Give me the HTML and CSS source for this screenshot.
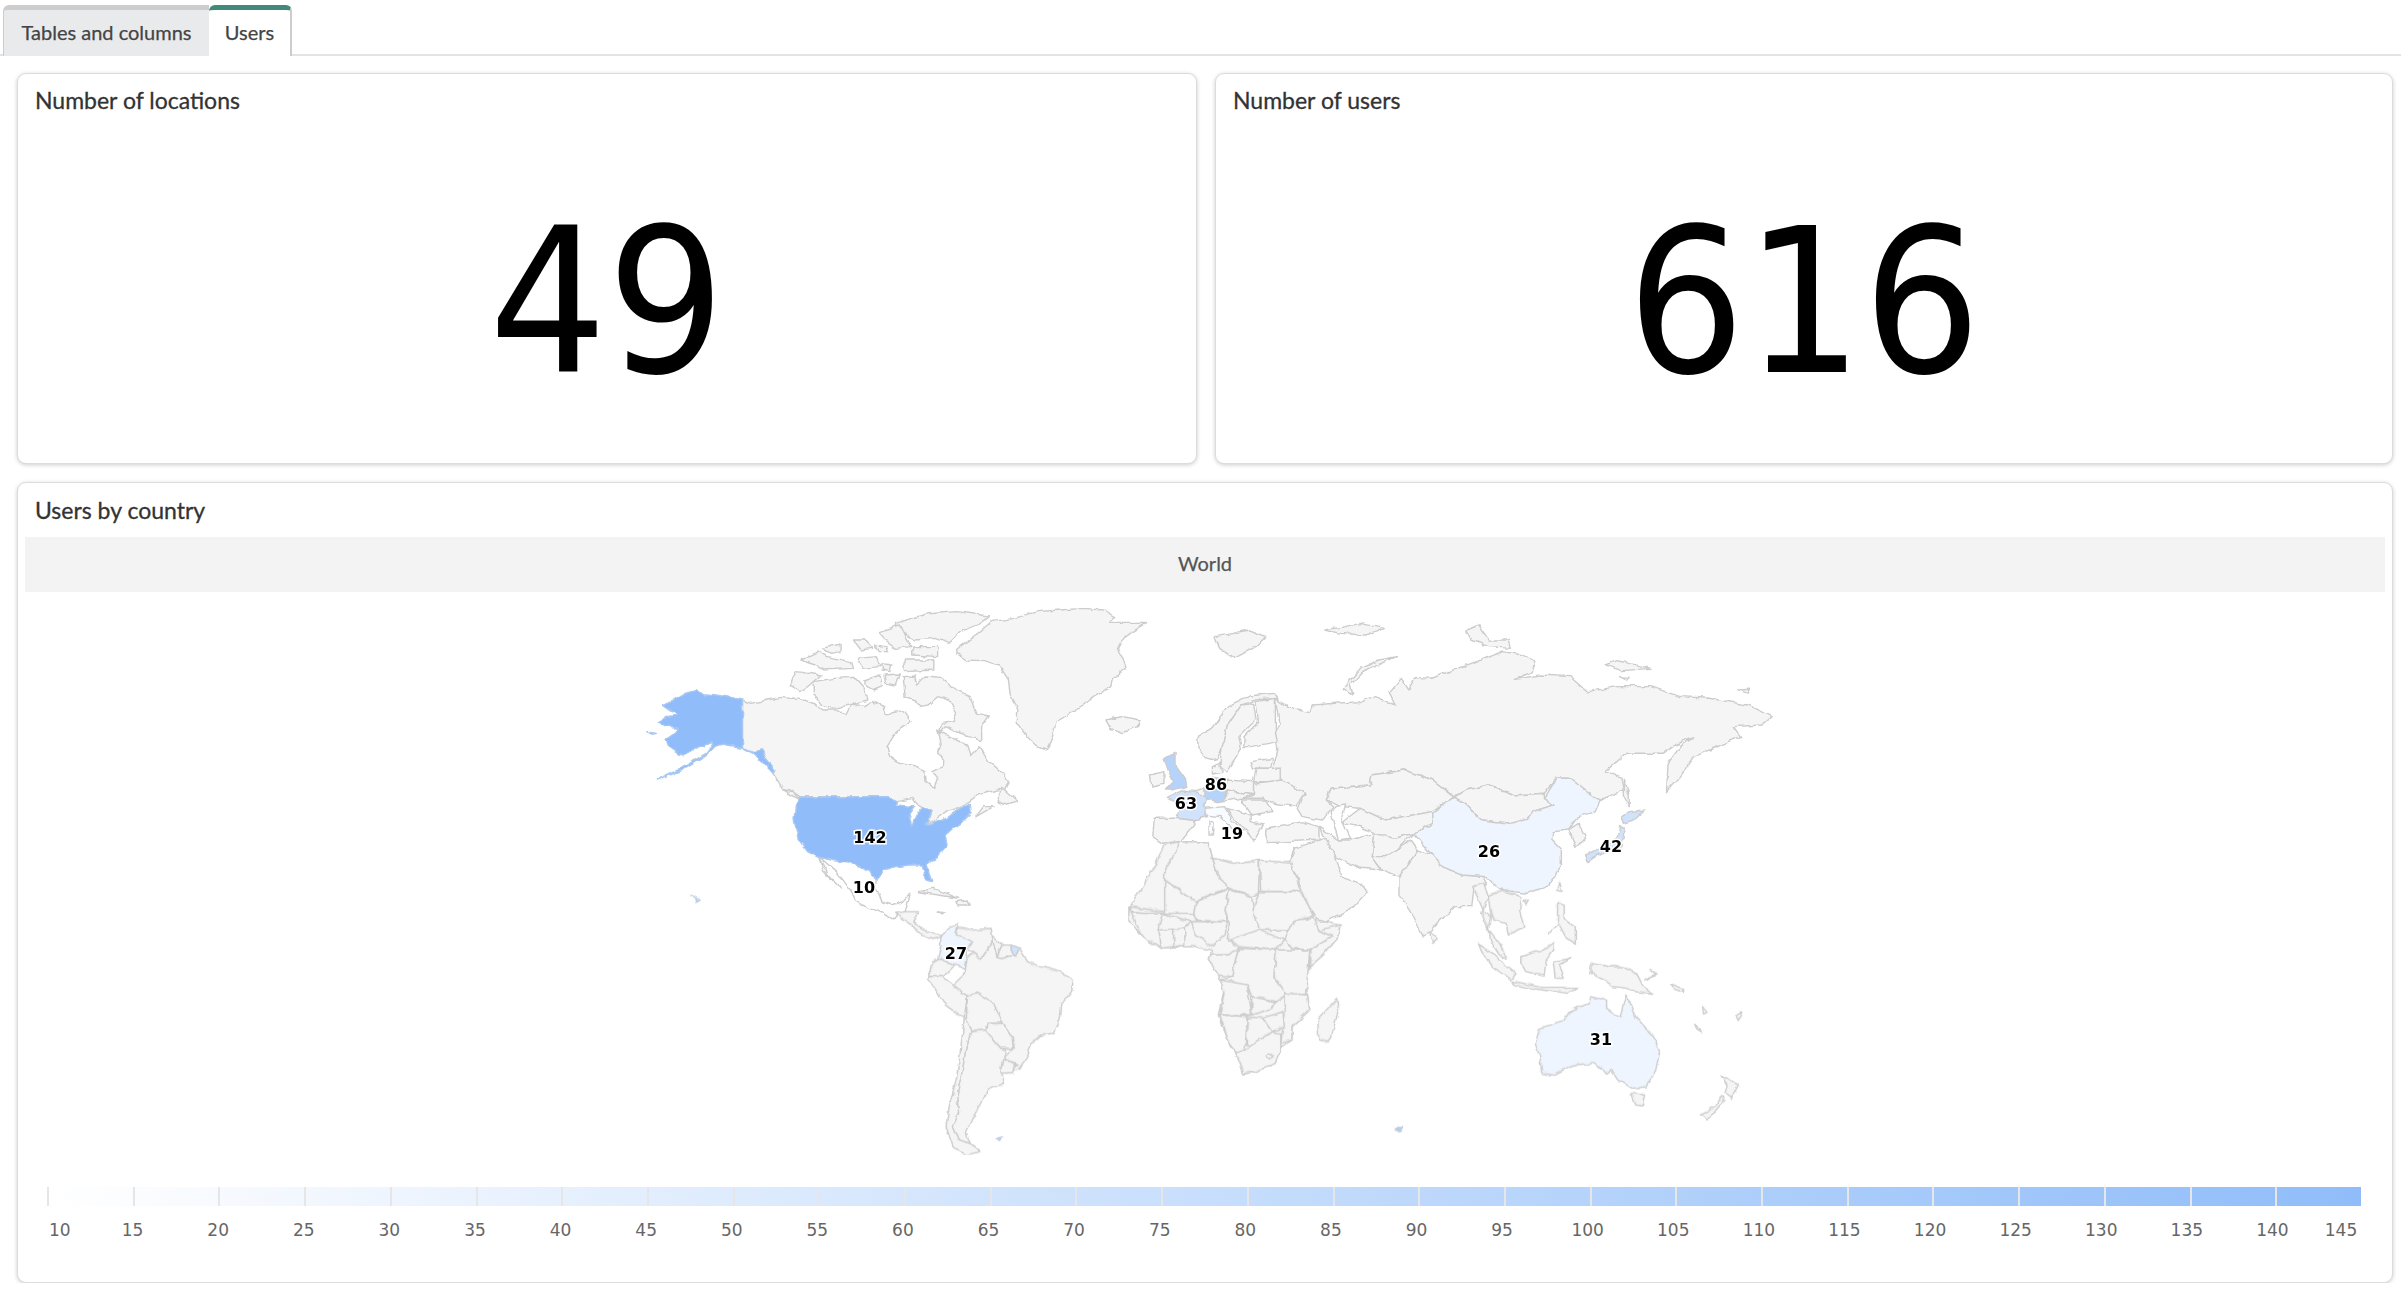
FILE: index.html
```html
<!DOCTYPE html>
<html lang="en">
<head>
    <meta charset="UTF-8">
    <title>Users</title>
    <link rel="stylesheet" href="styles.css">
</head>
<body>
    <div class="tabs">
        <div class="tab">Tables and columns</div>
        <div class="tab active">Users</div>
    </div>

    <div class="dash">
        <div class="card stat">
            <h4>Number of locations</h4>
            <div class="big">49</div>
        </div>
        <div class="card stat">
            <h4>Number of users</h4>
            <div class="big">616</div>
        </div>

        <div class="card map-card">
            <h4>Users by country</h4>
            <div class="band">World</div>

            <svg class="map" width="2360" height="578" viewBox="25 592 2360 578">
                <defs>
                    <!-- roughens the hand drawn coastlines -->
                    <filter id="rough" x="0" y="0" width="100%" height="100%" filterUnits="objectBoundingBox">
                        <feTurbulence type="fractalNoise" baseFrequency="0.11" numOctaves="2" seed="4"/>
                        <feDisplacementMap in="SourceGraphic" scale="5" xChannelSelector="R" yChannelSelector="G"/>
                    </filter>
                </defs>
                <g filter="url(#rough)">
                <!-- north america -->
                <g transform="translate(620,590) scale(.3827,.3333)">
                    <path d="M880,178 L905,155 L935,130 L970,95 L1030,85 L1090,65 L1150,60 L1210,55 L1265,60 L1295,80 L1280,100 L1375,100 L1340,125 L1310,150 L1300,180 L1310,200 L1320,235 L1290,265 L1285,290 L1240,320 L1210,345 L1170,375 L1140,395 L1130,440 L1115,478 L1085,465 L1060,435 L1035,395 L1040,360 L1020,320 L1015,270 L990,225 L950,212 L905,210 L880,190 Z"/>
                    <path d="M1272,395 L1290,382 L1320,388 L1355,392 L1358,405 L1320,425 L1295,420 L1280,408 Z"/>
                    <path d="M320,330 L345,340 L385,330 L420,322 L445,325 L470,325 L510,342 L530,360 L570,360 L590,375 L605,342 L640,350 L660,335 L690,350 L695,372 L740,362 L760,395 L735,415 L715,438 L698,470 L705,500 L730,520 L770,530 L797,545 L800,575 L820,592 L828,570 L815,545 L845,530 L846,505 L830,490 L838,450 L830,420 L860,440 L905,462 L915,497 L938,470 L965,515 L1000,550 L1015,575 L1005,598 L985,600 L935,615 L905,640 L870,660 L855,665 L825,690 L805,700 L815,665 L790,650 L775,640 L765,625 L725,635 L700,620 L470,620 L445,600 L425,595 L400,550 L405,540 L385,510 L370,480 L350,485 L320,472 Z"/>
                    <path d="M740,260 L770,258 L775,285 L800,258 L840,262 L880,300 L915,320 L930,370 L965,378 L945,410 L945,452 L910,440 L880,425 L850,410 L835,430 L840,400 L870,395 L880,370 L860,330 L830,320 L805,345 L785,350 L770,330 L745,320 Z"/>
                    <path d="M640,270 L680,255 L685,290 L665,300 L640,285 Z"/>
                    <path d="M690,255 L730,252 L720,285 L695,280 Z"/>
                    <path d="M505,275 L560,265 L610,262 L640,300 L645,330 L600,345 L560,355 L525,345 L505,310 Z"/>
                    <path d="M445,285 L460,245 L525,255 L490,290 L470,305 Z"/>
                    <path d="M720,100 L800,72 L880,65 L965,78 L940,100 L890,125 L860,160 L825,145 L770,150 L740,130 Z"/>
                    <path d="M745,210 L820,210 L820,240 L745,245 Z"/>
                    <path d="M680,125 L730,105 L745,140 L760,170 L720,175 L690,150 Z"/>
                    <path d="M610,150 L640,150 L660,175 L630,180 Z"/>
                    <path d="M665,165 L695,170 L700,185 L675,185 Z"/>
                    <path d="M530,175 L575,162 L575,185 L550,190 Z"/>
                    <path d="M470,210 L520,185 L540,200 L605,215 L610,235 L530,240 L510,225 Z"/>
                    <path d="M620,205 L670,200 L680,230 L630,235 Z"/>
                    <path d="M685,220 L710,225 L705,245 L685,240 Z"/>
                    <path d="M765,170 L830,170 L830,200 L765,195 Z"/>
                    <path d="M985,635 L1000,595 L1020,615 L1040,635 L1010,645 Z"/>
                    <path d="M930,680 L950,650 L975,650 L945,670 Z"/>
                    <path d="M425,600 L450,605 L470,628 L445,615 Z"/>
                    <path d="M780,905 L820,895 L885,925 L830,915 Z"/>
                    <path d="M875,935 L910,930 L915,945 L880,945 Z"/>
                    <path d="M830,965 L850,968 L845,975 Z"/>
                    <path class="c-white" d="M515,800 L560,812 L590,815 L620,825 L650,845 L672,865 L670,900 L685,935 L710,945 L740,935 L760,910 L745,965 L725,975 L715,990 L690,970 L650,955 L615,930 L605,905 L570,850 L550,830 L530,810 Z"/>
                    <path class="c-white" d="M520,805 L545,855 L575,895 L560,880 L530,840 Z"/>
                    <path class="c-us" d="M320,330 L290,322 L250,315 L215,310 L195,302 L165,312 L140,330 L112,345 L128,358 L150,375 L125,380 L100,395 L118,408 L150,412 L140,432 L118,450 L125,470 L150,490 L165,495 L190,480 L215,470 L235,460 L245,458 L225,490 L190,515 L160,535 L125,555 L95,570 L130,555 L165,540 L200,515 L225,495 L245,470 L265,463 L320,472 L350,485 L370,480 L385,510 L405,540 L400,550 L375,520 L350,490 L320,472 Z"/>
                    <path class="c-us" d="M470,622 L700,620 L725,635 L722,645 L770,650 L755,675 L762,705 L780,665 L790,650 L815,665 L800,705 L845,690 L880,660 L915,640 L918,670 L890,700 L870,715 L850,735 L855,770 L830,800 L800,825 L815,875 L800,870 L790,825 L760,825 L720,830 L690,840 L672,865 L650,845 L620,825 L590,815 L560,812 L515,800 L490,785 L465,745 L455,690 L458,650 Z"/>
                    <path class="c-us" d="M70,425 L95,430 L85,433 Z"/>
                </g>

                <!-- central and south america -->
                <g transform="translate(620,880) scale(.3827,.3333)">
                    <path d="M720,100 L745,95 L780,95 L765,125 L795,150 L825,160 L840,165 L830,172 L805,178 L780,155 L745,120 Z"/>
                    <path class="c-low" d="M838,170 L860,145 L885,130 L878,160 L920,190 L905,205 L905,235 L900,265 L875,255 L845,240 L830,235 L838,200 Z"/>
                    <path d="M885,140 L925,150 L970,145 L975,185 L945,235 L925,215 L905,210 L920,190 L878,160 Z"/>
                    <path d="M975,170 L1000,195 L985,230 L970,205 L975,185 Z"/>
                    <path d="M1000,195 L1025,195 L1025,225 L1005,235 L985,230 Z"/>
                    <path class="c-fr" d="M1025,195 L1045,205 L1035,225 L1025,218 Z"/>
                    <path d="M830,235 L875,255 L845,290 L810,290 L808,265 Z"/>
                    <path d="M1045,205 L1065,245 L1100,260 L1150,275 L1185,300 L1180,335 L1155,370 L1150,420 L1135,460 L1100,465 L1075,490 L1065,530 L1040,570 L1025,570 L1040,555 L1000,535 L1030,505 L1028,475 L1000,440 L990,400 L975,370 L935,340 L908,348 L890,335 L870,318 L900,285 L900,265 L905,235 L925,215 L945,235 L975,185 L985,230 L1005,235 L1025,225 L1035,225 Z"/>
                    <path d="M810,290 L845,290 L870,318 L890,335 L908,348 L900,410 L885,405 L850,375 L820,320 L805,300 Z"/>
                    <path d="M908,348 L935,340 L975,370 L990,400 L1000,430 L960,430 L955,450 L920,455 L905,415 Z"/>
                    <path d="M960,430 L1000,430 L1025,475 L1028,505 L995,505 L955,450 Z"/>
                    <path d="M900,410 L905,415 L920,455 L905,500 L895,570 L880,650 L885,700 L868,740 L885,780 L915,790 L940,815 L905,825 L870,800 L852,740 L860,680 L880,590 L890,510 Z"/>
                    <path d="M920,455 L955,450 L995,505 L1010,510 L995,575 L1005,610 L960,630 L945,670 L925,710 L905,760 L915,790 L885,780 L868,740 L885,700 L880,650 L895,570 L905,500 Z"/>
                    <path d="M1000,535 L1035,555 L1025,578 L1000,580 L995,570 Z"/>
                    <path class="c-isle" d="M985,775 L1000,770 L995,782 Z"/>
                    <path class="c-isle" d="M185,43 L200,52 L210,62 L198,67 L195,55 Z"/>
                </g>

                <!-- eurasia -->
                <g transform="translate(1050,590) scale(.4847,.3333)">
                    <path d="M470,375 L465,325 L490,350 L535,365 L545,345 L590,340 L640,335 L670,320 L712,345 L700,310 L725,265 L740,300 L755,262 L790,265 L830,240 L880,215 L935,185 L975,195 L1000,215 L995,245 L960,268 L1010,255 L1075,260 L1110,305 L1170,290 L1240,290 L1300,320 L1360,325 L1440,345 L1490,380 L1470,405 L1410,410 L1425,440 L1360,480 L1330,500 L1300,560 L1272,605 L1275,520 L1300,470 L1330,440 L1290,465 L1265,490 L1190,490 L1145,545 L1180,565 L1185,600 L1135,630 L1105,600 L1075,565 L1045,565 L1020,610 L960,615 L905,585 L860,600 L835,620 L790,570 L730,540 L665,555 L660,585 L580,595 L570,630 L585,650 L560,690 L520,680 L510,655 L525,610 L480,570 L460,535 L470,480 L465,430 L475,400 Z"/>
                    <path d="M1185,565 L1195,620 L1195,650 L1185,620 Z"/>
                    <path d="M715,200 L680,210 L640,235 L620,270 L605,295 L625,315 L620,285 L645,245 Z"/>
                    <path d="M340,140 L380,130 L410,120 L445,140 L425,170 L380,205 L350,175 Z"/>
                    <path d="M565,120 L610,110 L640,100 L690,115 L650,135 L600,130 Z"/>
                    <path d="M860,120 L885,105 L905,150 L945,150 L950,175 L905,170 L870,150 Z"/>
                    <path d="M1145,225 L1170,212 L1240,235 L1180,242 Z"/>
                    <path d="M1175,260 L1195,262 L1190,270 Z"/>
                    <path d="M1420,300 L1445,298 L1440,310 Z"/>
                    <path d="M115,390 L150,380 L185,390 L180,410 L150,428 L125,415 Z"/>
                    <path d="M305,475 L305,440 L335,415 L365,350 L410,318 L460,310 L470,325 L425,330 L395,345 L365,410 L355,470 L345,510 L320,500 Z"/>
                    <path d="M355,470 L365,410 L395,345 L420,340 L425,390 L390,440 L395,480 L365,545 L350,530 Z"/>
                    <path d="M425,335 L465,325 L465,430 L470,455 L415,470 L400,470 L400,440 L430,395 Z"/>
                    <path d="M207,555 L235,545 L235,580 L210,588 Z"/>
                    <path d="M335,530 L350,520 L355,550 L335,555 Z"/>
                    <path d="M415,515 L460,505 L455,535 L420,535 Z"/>
                    <path d="M425,535 L475,535 L475,575 L420,575 Z"/>
                    <path d="M360,570 L420,575 L420,615 L365,600 Z"/>
                    <path d="M420,580 L480,570 L525,610 L505,650 L465,640 L440,625 L385,625 L420,615 Z"/>
                    <path d="M395,630 L445,630 L460,665 L415,675 Z"/>
                    <path d="M365,600 L420,615 L385,628 L345,635 L360,630 Z"/>
                    <path d="M300,605 L320,590 L320,625 Z"/>
                    <path d="M365,655 L415,675 L415,695 L440,705 L420,755 L405,720 L375,680 Z"/>
                    <path d="M215,685 L262,685 L295,690 L300,700 L270,755 L232,760 L212,740 Z"/>
                    <path d="M445,715 L520,695 L555,710 L555,750 L450,758 L445,730 Z"/>
                    <path d="M835,622 L860,600 L905,585 L960,615 L1020,610 L1020,625 L1040,645 L995,665 L985,685 L950,700 L890,690 L855,640 Z"/>
                    <path d="M570,630 L580,595 L660,585 L665,555 L730,540 L790,570 L835,622 L790,665 L730,680 L690,690 L640,655 L600,650 Z"/>
                    <path d="M600,700 L640,655 L690,690 L730,680 L790,665 L790,700 L750,730 L710,745 L670,730 L640,710 Z"/>
                    <path class="c-white" d="M590,650 L610,645 L600,690 L618,745 L595,750 L585,700 L580,665 Z"/>
                    <path d="M555,710 L595,750 L620,750 L670,730 L665,800 L685,840 L640,835 L590,800 L570,760 Z"/>
                    <path d="M670,730 L710,745 L750,730 L715,780 L690,800 L665,800 Z"/>
                    <path d="M665,800 L690,800 L715,780 L745,750 L760,780 L740,820 L720,860 L685,840 Z"/>
                    <path d="M505,775 L565,745 L590,800 L600,860 L640,880 L655,905 L620,960 L570,995 L550,985 L530,940 L505,880 L490,825 Z"/>
                    <path d="M740,820 L760,780 L790,795 L810,830 L850,855 L895,860 L900,885 L875,890 L870,950 L835,950 L800,1000 L785,1025 L767,1038 L745,970 L720,910 L720,860 Z"/>
                    <path d="M1070,720 L1090,700 L1105,745 L1085,775 L1075,735 Z"/>
                    <path class="c-mid" d="M235,505 L258,490 L258,525 L280,570 L282,590 L250,600 L238,600 L255,575 L245,545 Z"/>
                    <path class="c-fr" d="M240,625 L275,600 L300,605 L325,625 L315,650 L325,680 L295,690 L262,685 L268,640 Z"/>
                    <path class="c-mid" d="M320,590 L335,565 L365,570 L360,630 L345,635 L320,625 Z"/>
                    <path class="c-faint" d="M320,655 L360,650 L375,690 L400,720 L385,725 L350,680 L320,675 Z"/>
                    <path class="c-faint" d="M328,695 L337,695 L335,735 L328,735 Z"/>
                    <path class="c-low" d="M835,622 L855,640 L890,690 L950,700 L985,685 L995,665 L1040,645 L1020,625 L1045,565 L1075,565 L1105,600 L1135,630 L1125,665 L1090,680 L1070,720 L1040,725 L1035,750 L1055,780 L1055,830 L1030,885 L985,910 L955,905 L925,895 L900,860 L850,855 L810,830 L785,790 L750,730 L790,700 L790,665 Z"/>
                    <path class="c-fr" d="M1180,680 L1195,665 L1228,660 L1205,690 L1185,700 Z"/>
                    <path class="c-fr" d="M1175,710 L1185,715 L1180,770 L1135,790 L1110,815 L1105,795 L1140,770 L1170,745 Z"/>
                </g>

                <!-- africa, south east asia, oceania -->
                <g transform="translate(1100,880) scale(.4464,.3333)">
                    <path d="M143,-105 L176,-115 L241,-115 L252,-65 L300,-50 L345,-55 L357,-60 L430,-50 L450,20 L480,120 L540,135 L535,170 L500,225 L470,260 L460,290 L465,345 L470,390 L430,440 L430,480 L405,505 L395,550 L350,575 L320,582 L305,520 L290,490 L265,405 L278,330 L265,285 L245,240 L250,210 L215,200 L170,200 L135,205 L95,170 L65,120 L65,80 L90,30 L120,-35 Z"/>
                    <path d="M176,-115 L241,-115 L252,-65 L270,0 L290,20 L215,65 L145,0 L145,-30 L165,-70 Z"/>
                    <path d="M252,-65 L300,-50 L345,-55 L357,-60 L355,40 L340,50 L290,25 L270,0 Z"/>
                    <path d="M357,-60 L430,-50 L450,35 L360,35 Z"/>
                    <path d="M360,35 L450,35 L480,110 L440,120 L420,150 L350,150 L340,100 L355,40 Z"/>
                    <path d="M65,80 L145,95 L145,0 L215,65 L210,100 L140,100 L70,95 Z"/>
                    <path d="M290,30 L340,50 L345,105 L355,150 L310,180 L285,180 L290,130 L280,90 Z"/>
                    <path d="M215,65 L290,25 L280,90 L285,125 L215,120 L210,100 Z"/>
                    <path d="M205,125 L285,125 L280,165 L250,200 L215,165 Z"/>
                    <path d="M420,150 L440,120 L480,115 L490,150 L520,170 L470,210 L430,205 L415,180 Z"/>
                    <path d="M490,150 L540,135 L535,170 L500,225 L470,260 L470,210 L520,170 Z"/>
                    <path d="M290,180 L355,150 L415,180 L395,210 L310,200 Z"/>
                    <path d="M310,205 L395,210 L390,290 L420,345 L395,365 L340,350 L330,315 L270,300 L295,290 Z"/>
                    <path d="M250,225 L285,225 L310,205 L295,290 L265,285 L245,240 Z"/>
                    <path d="M395,210 L470,210 L465,290 L460,345 L420,345 L390,290 Z"/>
                    <path d="M270,300 L330,315 L340,405 L268,405 L278,340 Z"/>
                    <path d="M340,350 L395,365 L385,385 L340,405 Z"/>
                    <path d="M415,340 L465,345 L470,390 L430,440 L430,480 L405,490 L410,440 L415,400 Z"/>
                    <path d="M268,405 L330,410 L325,510 L305,520 L290,490 Z"/>
                    <path d="M330,410 L365,415 L385,455 L335,500 L328,490 Z"/>
                    <path d="M365,415 L410,395 L413,440 L385,455 Z"/>
                    <path d="M335,500 L385,455 L405,460 L405,505 L395,550 L350,575 L320,582 L305,520 L325,510 Z"/>
                    <path d="M380,520 L390,530 L380,540 L372,530 Z"/>
                    <path d="M70,95 L140,100 L135,205 L95,170 Z"/>
                    <path d="M165,145 L190,145 L190,195 L165,200 Z"/>
                    <path d="M130,150 L165,145 L165,200 L135,205 Z"/>
                    <path d="M140,100 L205,125 L190,145 L130,150 Z"/>
                    <path d="M530,355 L535,390 L520,460 L510,488 L490,480 L488,420 Z"/>
                    <path d="M740,155 L750,165 L755,180 L745,190 L740,170 Z"/>
                    <path d="M835,20 L860,10 L870,50 L855,100 L870,150 L875,110 L860,95 Z"/>
                    <path d="M870,50 L900,30 L945,50 L940,90 L950,140 L915,165 L910,130 L880,120 L875,100 Z"/>
                    <path d="M872,150 L895,190 L912,235 L895,225 L875,180 Z"/>
                    <path d="M848,192 L880,220 L930,280 L920,300 L880,260 L855,215 Z"/>
                    <path d="M925,303 L990,322 L1070,322 L1050,340 L990,330 L930,315 Z"/>
                    <path d="M945,230 L990,210 L1015,185 L1015,210 L1000,240 L995,285 L955,275 L945,250 Z"/>
                    <path d="M1015,245 L1055,235 L1030,255 L1040,295 L1020,295 Z"/>
                    <path d="M1025,70 L1040,75 L1040,115 L1065,140 L1065,190 L1045,175 L1025,125 Z"/>
                    <path d="M1005,165 L1025,135 L1015,150 Z"/>
                    <path d="M1100,250 L1140,260 L1170,260 L1200,280 L1215,320 L1238,340 L1200,335 L1180,325 L1150,320 L1135,305 L1100,280 Z"/>
                    <path d="M1230,265 L1250,285 L1220,300 L1245,282 Z"/>
                    <path d="M1280,312 L1305,325 L1305,338 L1285,325 Z"/>
                    <path d="M1030,8 L1035,35 L1022,30 Z"/>
                    <path d="M950,60 L960,60 L955,75 Z"/>
                    <path d="M1350,380 L1360,400 L1352,405 Z"/>
                    <path d="M1330,432 L1350,458 L1335,450 Z"/>
                    <path d="M1425,405 L1440,398 L1430,425 Z"/>
                    <path class="c-low" d="M975,490 L985,445 L1040,420 L1050,395 L1095,370 L1100,350 L1135,360 L1135,385 L1165,410 L1178,345 L1200,410 L1240,470 L1255,510 L1245,570 L1225,620 L1190,625 L1160,600 L1145,570 L1135,585 L1110,550 L1060,555 L1015,585 L990,580 L985,530 Z"/>
                    <path d="M1190,640 L1220,645 L1215,678 L1200,675 Z"/>
                    <path d="M1392,585 L1430,615 L1415,655 L1400,640 L1405,615 Z"/>
                    <path d="M1395,650 L1400,660 L1360,720 L1345,705 L1375,680 Z"/>
                    <path class="c-isle" d="M662,742 L678,742 L674,752 L662,752 Z"/>
                </g>
                </g>

                <text x="870" y="843">142</text>
                <text x="864" y="893">10</text>
                <text x="1186" y="809">63</text>
                <text x="1216" y="790">86</text>
                <text x="1232" y="839">19</text>
                <text x="1489" y="857">26</text>
                <text x="1611" y="852">42</text>
                <text x="956" y="959">27</text>
                <text x="1601" y="1045">31</text>
            </svg>

            <div class="legend">
                <div class="scale">
                    <i></i><i></i><i></i><i></i><i></i><i></i><i></i><i></i><i></i>
                    <i></i><i></i><i></i><i></i><i></i><i></i><i></i><i></i><i></i>
                    <i></i><i></i><i></i><i></i><i></i><i></i><i></i><i></i><i></i>
                </div>
                <div class="scale-labels">
                    <span>10</span><span>15</span><span>20</span><span>25</span><span>30</span><span>35</span><span>40</span>
                    <span>45</span><span>50</span><span>55</span><span>60</span><span>65</span><span>70</span><span>75</span>
                    <span>80</span><span>85</span><span>90</span><span>95</span><span>100</span><span>105</span><span>110</span>
                    <span>115</span><span>120</span><span>125</span><span>130</span><span>135</span><span>140</span><span>145</span>
                </div>
            </div>
        </div>
    </div>
</body>
</html>
```

FILE: styles.css
```css
*{
    box-sizing: border-box;
}

body{
    margin:0;
    background-color:#fff;
    font-family: 'Lato', 'Open Sans', sans-serif;
    color:#333;
}

.tabs{
    display:flex;
    height:56px;
    padding:5px 0 0 3px;
    border-bottom:2px solid #e3e3e3;
}

.tab{
    width:206px;
    height:51px;
    background-color:#e9eaec;
    border-top:5px solid #cdcdcd;
    border-left:1px solid #ccc;
    border-radius:6px 0 0 0;
    font-size:20px;
    line-height:44px;
    text-align:center;
    color:#444;
    -webkit-text-stroke:0.25px #444;
}

.tab.active{
    width:83px;
    background-color:#fff;
    border-top-color:#3f8a78;
    border-right:2px solid #ccc;
    border-left:0;
    border-radius:6px 6px 0 0;
}

.dash{
    display:grid;
    grid-template-columns:1180px 1178px;
    grid-template-rows:391px 801px;
    gap:18px;
    padding:17px 0 0 17px;
}

.card{
    background-color:#fff;
    border:1px solid #dcdcdc;
    border-radius:9px;
    box-shadow:0 1px 4px rgba(0,0,0,0.2);
}

h4{
    margin:0;
    padding:9px 17px 0;
    font-size:23px;
    line-height:34px;
    font-weight:400;
    -webkit-text-stroke:0.3px #333;
}

.stat{
    display:flex;
    flex-direction:column;
}

.big{
    flex:1;
    display:flex;
    align-items:center;
    justify-content:center;
    padding-top:24px;
    font-family:'DejaVu Sans', sans-serif;
    font-size:202px;
    color:#000;
    transform:scaleX(.918);
}

.map-card{
    grid-column:1 / 3;
    padding:0 7px;
}

.map-card h4{
    padding:10px 10px 0;
}

.band{
    height:55px;
    margin-top:10px;
    background-color:#f3f3f3;
    color:#555;
    font-size:20px;
    line-height:53px;
    text-align:center;
    -webkit-text-stroke:0.25px #555;
}

.map{
    display:block;
}

.map path{
    fill:#f5f5f5;
    stroke:#ccc;
    stroke-width:1.4;
    stroke-linejoin:round;
    vector-effect:non-scaling-stroke;
}

.map path.c-white{ fill:#fff; }
.map path.c-us{ fill:#90bdf9; stroke:#a9c8f2; }
.map path.c-mid{ fill:#b5d3fb; }
.map path.c-fr{ fill:#d0e2fc; }
.map path.c-low{ fill:#eef5fe; }
.map path.c-faint{ fill:#f8fbff; }
.map path.c-isle{ fill:#b9cbe3; stroke:#c4d2e6; }

.map text{
    font-family:'DejaVu Sans', sans-serif;
    font-size:16px;
    font-weight:700;
    text-anchor:middle;
    fill:#000;
    stroke:#fff;
    stroke-width:3px;
    paint-order:stroke;
}

.legend{
    margin:17px 0 0 22px;
    width:2314px;
}

.scale{
    display:grid;
    grid-template-columns:repeat(27, 1fr);
    height:19px;
    background:linear-gradient(to right, #fff, #90bdf9);
}

.scale i{
    border-left:2px solid #e6e6e6;
}

.scale-labels{
    display:flex;
    margin-top:12px;
    font-family:'DejaVu Sans', sans-serif;
    font-size:17px;
    line-height:24px;
    color:#666;
}

.scale-labels span{
    width:85.6px;
    text-align:center;
}

.scale-labels span:first-child{
    width:42.8px;
    padding-left:2px;
    text-align:left;
}

.scale-labels span:last-child{
    width:44px;
    padding-right:2px;
    text-align:right;
}
```
